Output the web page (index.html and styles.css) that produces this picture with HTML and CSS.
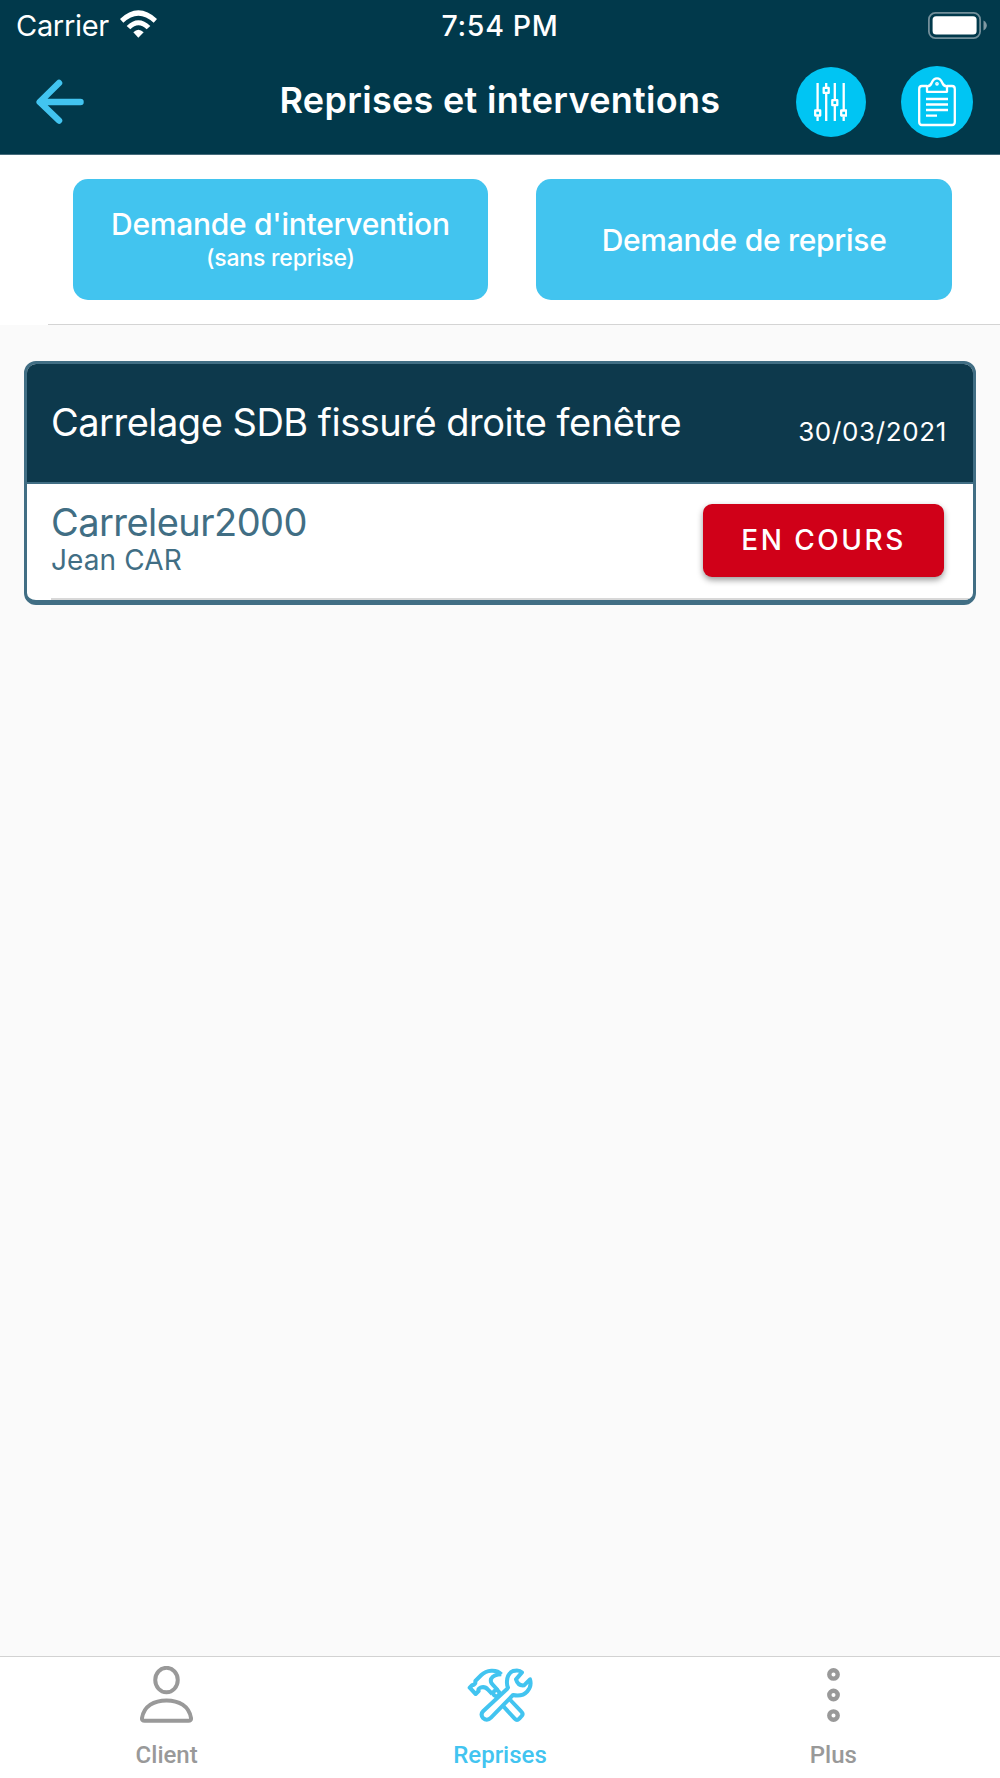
FILE: index.html
```html
<!DOCTYPE html>
<html lang="fr">
<head>
  <meta charset="UTF-8" />
  <meta name="viewport" content="width=device-width, initial-scale=1.0" />
  <title>Reprises et interventions</title>
  <link rel="stylesheet" href="styles.css">
</head>
<body>
  <header class="header">
    <div class="status-bar">
      <div class="status-left">
        <span class="carrier">Carrier</span>
        <svg class="wifi" viewBox="0 0 111 84">
          <path d="M0 27 Q55 -25 111 27 L101 38 Q55 -4 10 38Z" />
          <path d="M20 48 Q55 13 91 48 L80 58 Q55 34 31 58Z" />
          <path d="M40 67 Q55 52 71 67 L55 83Z" />
        </svg>
      </div>
      <span class="time">7:54 PM</span>
      <div class="status-right">
        <svg class="battery" viewBox="0 0 59 27">
          <rect class="battery-case" x="0.9" y="0.9" width="51.2" height="25.2" rx="6.5" />
          <rect class="battery-level" x="4.6" y="4.3" width="44" height="18.2" rx="3.5" />
          <path class="battery-tip" d="M55.5 8.5 Q58.8 10.5 58.8 13.5 Q58.8 16.500 55.5 18.5Z" />
        </svg>
      </div>
    </div>

    <div class="nav-bar">
      <a class="back" href="#" aria-label="Retour">
        <svg viewBox="0 0 48 46">
          <path d="M44.500 23 H4 M23 4 L3.700 23 L23 41.500" />
        </svg>
      </a>
      <h1>Reprises et interventions</h1>
      <div class="nav-actions">
        <button class="round-btn filter-btn" aria-label="Filtres">
          <svg viewBox="0 0 33 38">
            <path d="M3.600 0 V27 M3.600 33.500 V38 M12.200 0 V4.500 M12.200 10.500 V38 M20.800 0 V16.500 M20.800 23 V38 M29.700 0 V27 M29.700 33.500 V38" />
            <path d="M1.200 27.500 h5 v5 h-5z M9.700 4.900 h5 v5 h-5z M18.300 17.200 h5 v5 h-5z M27.200 27.500 h5 v5 h-5z" />
          </svg>
        </button>
        <button class="round-btn list-btn" aria-label="Liste">
          <svg viewBox="0 0 38 50">
            <path d="M9 9 H4 Q1.200 9 1.200 12 V45 Q1.200 48 4 48 H34 Q36.800 48 36.800 45 V12 Q36.800 9 34 9 H29" />
            <path d="M9 14.800 V9.500 Q12.500 9 13.600 6 Q15.500 1.300 19 1.300 Q22.500 1.300 24.400 6 Q25.500 9 29 9.500 V14.800Z" />
            <path d="M8 22 H30 M8 27.500 H30 M8 33 H30 M8 38.700 H19" />
            <circle cx="19" cy="6.800" r="0.700" />
          </svg>
        </button>
      </div>
    </div>
  </header>

  <section class="requests">
    <button class="request-btn">
      <span class="request-title">Demande d'intervention</span>
      <span class="request-note">(sans reprise)</span>
    </button>
    <button class="request-btn">
      <span class="request-title">Demande de reprise</span>
    </button>
  </section>

  <main class="content">
    <article class="card">
      <div class="card-header">
        <h2>Carrelage SDB fissuré droite fenêtre</h2>
        <span class="date">30/03/2021</span>
      </div>
      <div class="card-body">
        <div class="worker">
          <span class="company">Carreleur2000</span>
          <span class="person">Jean CAR</span>
        </div>
        <button class="status-btn">EN COURS</button>
      </div>
    </article>
  </main>

  <nav class="tabs">
    <a class="tab" href="#">
      <svg class="icon-client" viewBox="0 0 160 172">
        <ellipse cx="80" cy="42.500" rx="34" ry="37" />
        <path d="M14 165 Q5 165 6 157 C12 120 43 104 80 104 C117 104 148 120 154 157 Q155 165 146 165Z" />
      </svg>
      <span>Client</span>
    </a>
    <a class="tab active" href="#">
      <svg class="icon-tools" viewBox="110 64 201 168">
        <path d="M213 86 Q203 74 183 75 Q165 76 153 88 L135 106 V112 Q132 118 126 118 L118 126 L136 145 L145 136 Q142 130 150 126 Q164 121 173 132 L186 145" />
        <path d="M213 86 Q190 86 182 100 Q179 109 187 117 L202 133" />
        <circle cx="198" cy="143" r="9" />
        <path d="M220 183 L253 219 Q260 226 267 219 L274 211 Q280 205 273 198 L240 163" />
        <path d="M230 130 L159 196 Q149 206 158 217 Q170 228 182 216 L248 148 Q276 154 291 137 Q305 121 299 101 L281 119 Q263 121 257 101 L275 80 Q266 71 248 76 Q231 84 230 106 Q229 117 233 126Z" />
      </svg>
      <span>Reprises</span>
    </a>
    <a class="tab" href="#">
      <svg class="icon-more" viewBox="0 0 38 160">
        <circle cx="19" cy="19" r="12.500" />
        <circle cx="19" cy="80" r="12.500" />
        <circle cx="19" cy="141" r="12.500" />
      </svg>
      <span>Plus</span>
    </a>
  </nav>
</body>
</html>
```
FILE: styles.css
```css
* {
  box-sizing: border-box;
}

body {
  margin: 0;
  height: 1778px;
  display: flex;
  flex-direction: column;
  font-family: Inter, "Liberation Sans", sans-serif;
  background-color: #fafafa;
  color: #ffffff;
  white-space: nowrap;
}

button {
  border: none;
  padding: 0;
  font-family: inherit;
  color: #ffffff;
  cursor: pointer;
}

svg {
  display: block;
  fill: none;
  stroke-linejoin: round;
}

h1,
h2 {
  margin: 0;
}

a {
  text-decoration: none;
}

/* header */
.header {
  height: 155px;
  background-color: #01394b;
  border-bottom: 1px solid #456b7b;
}

.status-bar {
  height: 49px;
  display: grid;
  grid-template-columns: 1fr auto 1fr;
  align-items: center;
  padding: 2px 13px 0;
}

.status-left {
  display: flex;
  align-items: center;
  gap: 11px;
  padding-left: 3px;
}

.carrier {
  font-size: 29px;
  letter-spacing: -0.3px;
  line-height: 48px;
}

.wifi {
  width: 37px;
  height: 28px;
  margin-top: -4px;
  fill: #ffffff;
}

.time {
  margin-top: -2px;
  font-size: 28.5px;
  font-weight: 500;
  letter-spacing: 0.7px;
}

.status-right {
  display: flex;
  justify-content: flex-end;
  margin-top: -2px;
}

.battery {
  width: 59px;
  height: 27px;
}

.battery-case {
  stroke: #738f9a;
  stroke-width: 1.8;
}

.battery-level {
  fill: #ffffff;
}

.battery-tip {
  fill: #8099a3;
}

.nav-bar {
  height: 105px;
  display: grid;
  grid-template-columns: 1fr auto 1fr;
  align-items: center;
  padding: 0 27px;
}

.back {
  padding-left: 9px;
}

.back svg {
  width: 48px;
  height: 46px;
  stroke: #42c4f0;
  stroke-width: 6.5;
  stroke-linecap: round;
}

h1 {
  margin-top: -3px;
  font-size: 36px;
  font-weight: 600;
  letter-spacing: 0.3px;
  line-height: 44px;
}

.nav-actions {
  display: flex;
  align-items: center;
  justify-content: flex-end;
  gap: 35px;
}

.round-btn {
  display: flex;
  align-items: center;
  justify-content: center;
  border-radius: 50%;
  background-color: #00c5f3;
}

.round-btn svg {
  stroke: #ffffff;
  stroke-width: 2.3;
}

.filter-btn {
  width: 70px;
  height: 70px;
}

.filter-btn svg {
  width: 33px;
  height: 38px;
  margin-left: -1px;
}

.list-btn {
  width: 72px;
  height: 72px;
}

.list-btn svg {
  width: 38px;
  height: 50px;
}

/* request buttons */
.requests {
  height: 170px;
  display: flex;
  gap: 48px;
  padding: 24px 48px 25px 72.5px;
  background: linear-gradient(#d4d4d4, #d4d4d4) 48px 100% / 100% 1px no-repeat #ffffff;
}

.request-btn {
  flex: 1;
  display: flex;
  flex-direction: column;
  align-items: center;
  justify-content: center;
  border-radius: 15px;
  background-color: #42c4ef;
}

.request-title {
  font-size: 30px;
  font-weight: 500;
  letter-spacing: -0.27px;
  line-height: 36px;
}

.request-note {
  font-size: 23px;
  font-weight: 500;
  letter-spacing: -0.2px;
  line-height: 32px;
}

/* intervention card */
.content {
  flex: 1;
  padding: 36px 24px;
}

.card {
  height: 244px;
  border: 3px solid #416e84;
  border-bottom-width: 5px;
  border-radius: 12px;
  overflow: hidden;
  background-color: #ffffff;
}

.card-header {
  height: 120px;
  display: flex;
  justify-content: space-between;
  padding: 0 26px 0 24px;
  background-color: #0d394c;
  border-bottom: 2px solid #416e84;
}

h2 {
  font-size: 38px;
  font-weight: 400;
  letter-spacing: -0.5px;
  line-height: 117px;
}

.date {
  font-size: 26px;
  letter-spacing: 0.65px;
  line-height: 135px;
}

.card-body {
  height: 116px;
  display: flex;
  justify-content: space-between;
  padding: 20px 29px 0 24px;
  background: linear-gradient(#d8d8d8, #d8d8d8) 24px 100% / 100% 2px no-repeat;
}

.worker {
  display: flex;
  flex-direction: column;
  color: #416e84;
}

.company {
  font-size: 38px;
  letter-spacing: -0.55px;
  line-height: 37px;
}

.person {
  font-size: 28px;
  letter-spacing: 0.1px;
  line-height: 38px;
}

.status-btn {
  width: 241px;
  height: 73px;
  padding-bottom: 1px;
  border-radius: 9px;
  background-color: #d00018;
  box-shadow: 0 3px 6px rgba(0, 0, 0, 0.4);
  font-size: 28px;
  font-weight: 500;
  letter-spacing: 2.5px;
}

/* bottom tabs */
.tabs {
  height: 122px;
  display: flex;
  background-color: #ffffff;
  border-top: 1px solid #d2d2d2;
}

.tab {
  flex: 1;
  display: flex;
  flex-direction: column;
  align-items: center;
  justify-content: space-between;
  padding: 9px 0 8px;
  font-family: Roboto, sans-serif;
  font-size: 24px;
  font-weight: 500;
  line-height: 30px;
  color: #999999;
}

.tab.active {
  color: #42c4f0;
}

.tab svg {
  stroke: currentColor;
}

.icon-client {
  width: 53px;
  height: 57px;
  stroke-width: 12;
}

.icon-tools {
  width: 67px;
  height: 56px;
  margin-top: 1px;
  margin-left: 1px;
  stroke-width: 12;
}

.icon-more {
  width: 13px;
  height: 54px;
  margin-top: 2px;
  stroke-width: 13;
}
```
